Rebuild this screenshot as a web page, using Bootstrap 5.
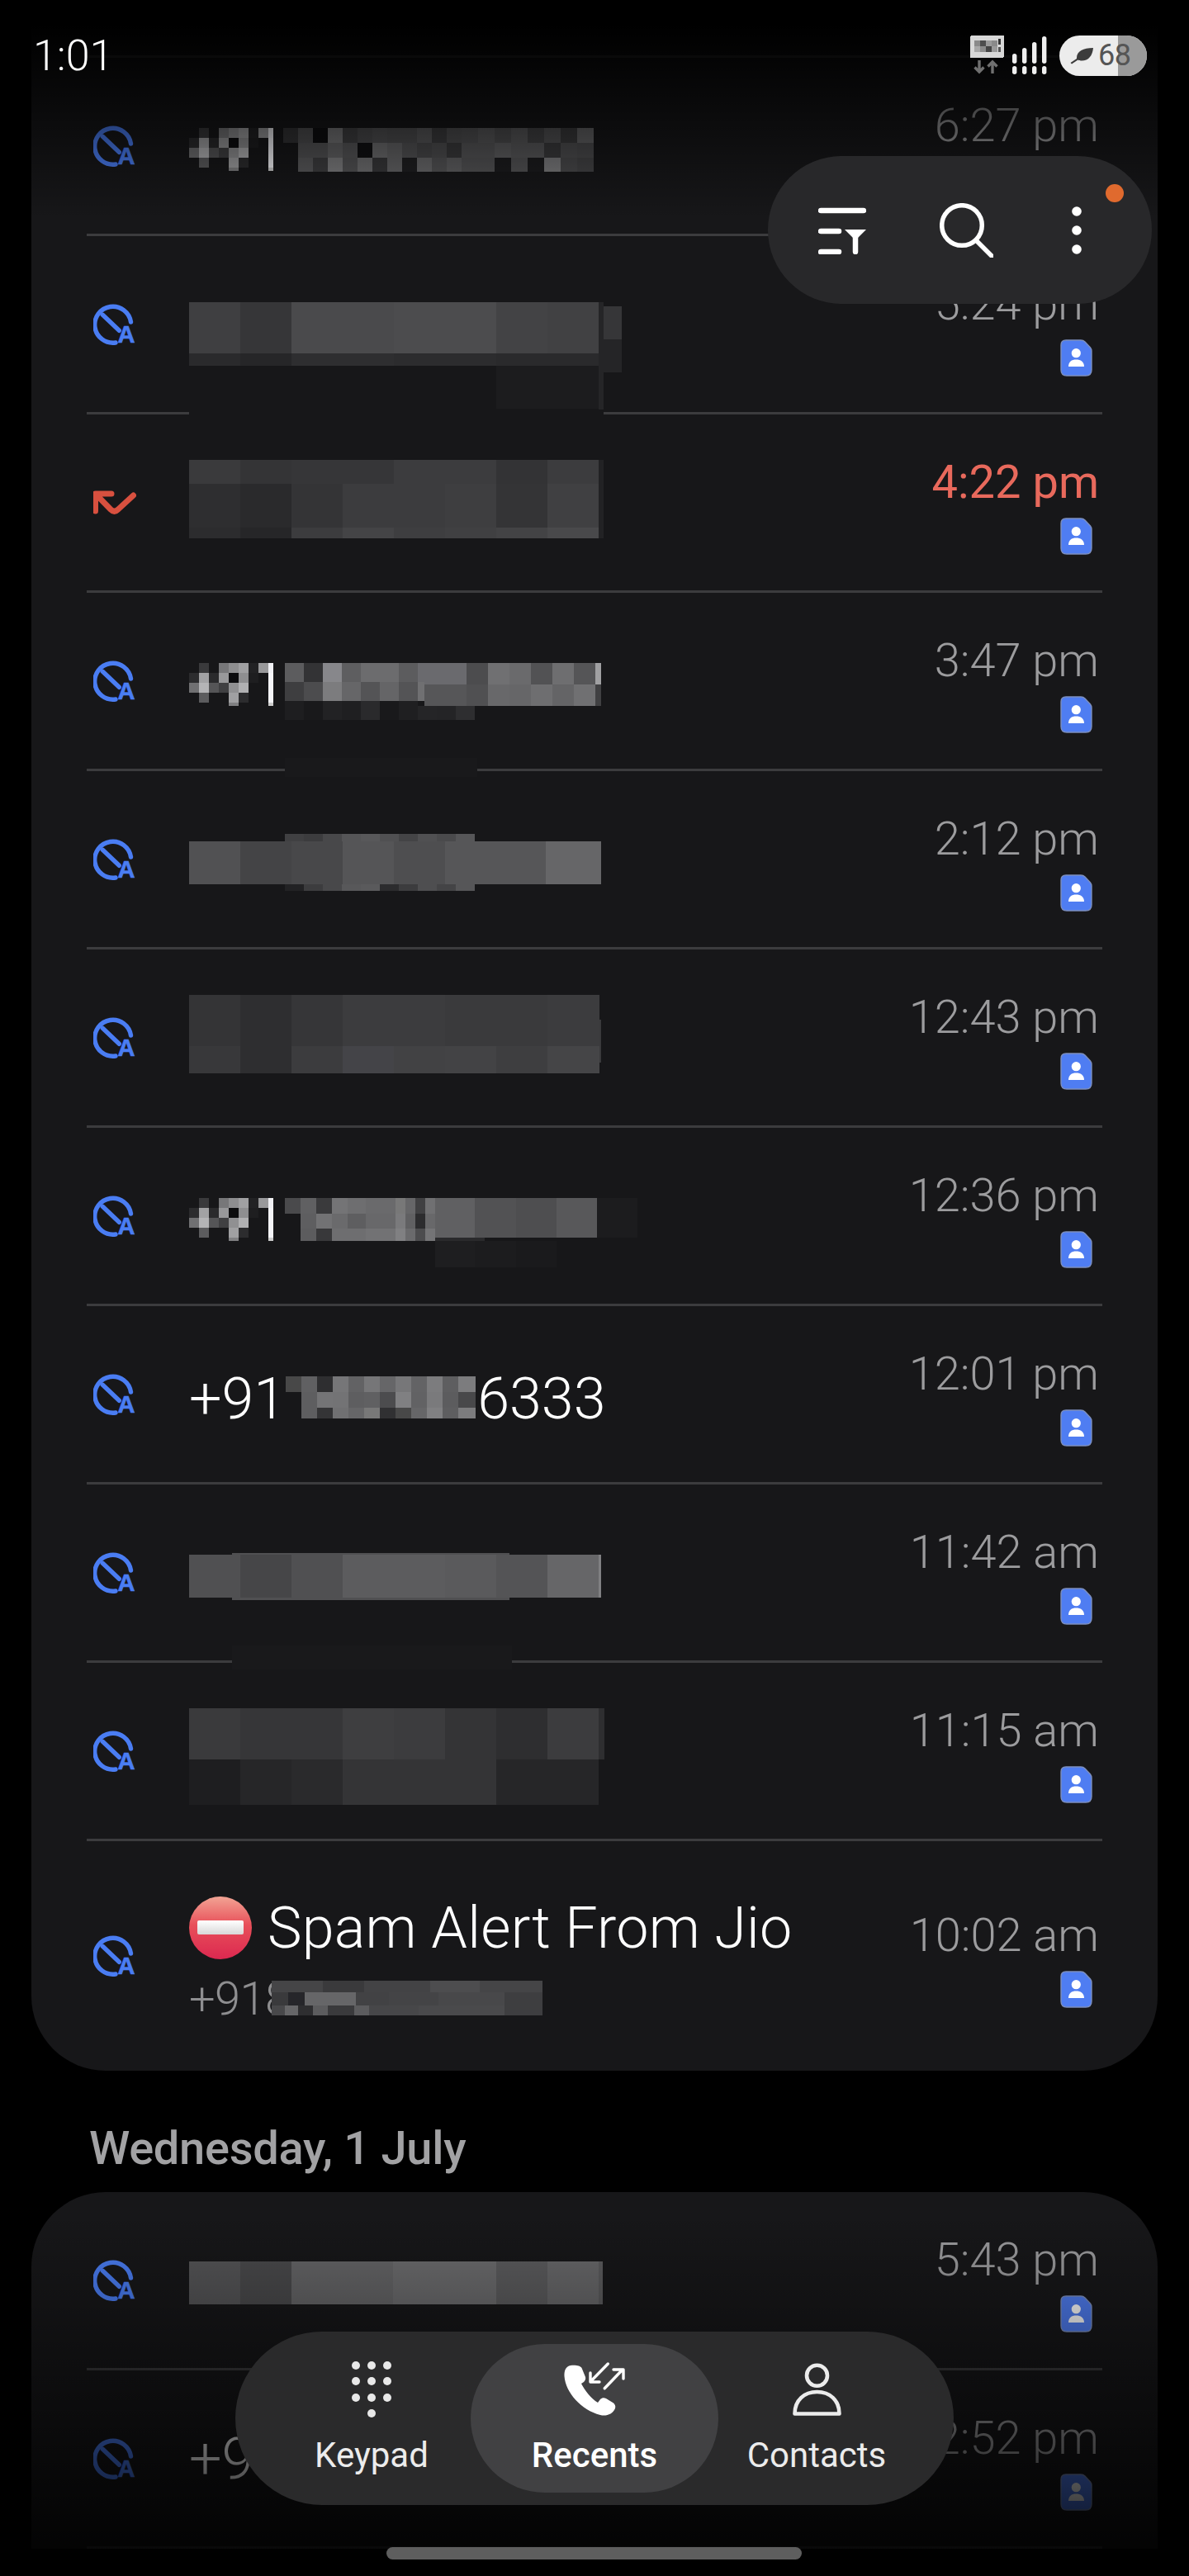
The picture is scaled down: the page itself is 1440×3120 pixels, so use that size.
<!DOCTYPE html>
<html lang="en">
<head>
<meta charset="utf-8">
<title>Phone - Recents</title>
<link href="https://cdn.jsdelivr.net/npm/bootstrap@5.3.0/dist/css/bootstrap.min.css" rel="stylesheet">
<style>
html,body{background:#000;margin:0}
body{font-family:Roboto,"Liberation Sans",sans-serif;width:1440px}
.phone-screen{position:relative;width:1440px;height:3120px;overflow:hidden;background:#000}
.log-card{margin:0 38px;background:#171719;border:0;border-radius:0 0 90px 90px;--bs-card-bg:#171719}
.log-card-second{border-radius:90px 90px 0 0}
.top-spacer{height:70px;margin:0 67px;border-bottom:3px solid #3c3c3e}
.call-row{height:216px;margin:0 67px;border-bottom:3px solid #3c3c3e}
.call-row-last{height:278px;border-bottom:0}
.call-icon{flex:0 0 124px;padding-left:8px}
.call-icon svg{display:block}
.name-col{flex:1 1 0;min-width:0}
.pix{display:block;overflow:visible;shape-rendering:crispEdges}
.name-text{font-weight:300;font-size:70px;line-height:76px;color:#fff;white-space:nowrap}
.num-line{height:213px;padding-top:8px}
.num-line span{position:relative;top:1px}
.num-line svg{overflow:visible;shape-rendering:crispEdges;flex:none}
.spam-col{padding-top:15px}
.spam-line{height:76px;gap:19px;letter-spacing:.25px}
.spam-line svg{flex:none}
.sub-num{font-weight:300;font-size:56px;line-height:70px;height:70px;margin-top:13px;color:#8e8e90;letter-spacing:-.6px;white-space:nowrap}
.sub-cover{overflow:visible;shape-rendering:crispEdges;margin:13px 0 0 -22px;flex:none}
.time-col{padding-right:4px}
.call-time{font-weight:300;font-size:56px;line-height:76px;color:#9c9c9e;white-space:nowrap}
.call-time-missed{color:#e8695c;font-weight:400}
.sim-badge{display:block;margin-top:5px;margin-right:8px}
.date-head{height:147px;padding:0 0 0 108px;margin:0;display:flex;align-items:flex-start}
.date-head span{display:block;margin-top:61px;font-weight:500;font-size:56px;line-height:66px;letter-spacing:-.3px;color:#a2a2a4}
.fade-top{position:absolute;left:0;right:0;top:0;height:265px;background:linear-gradient(to bottom,#000 30px,rgba(0,0,0,0) 265px)}
.fade-bottom{position:absolute;left:0;right:0;top:2680px;height:480px;background:linear-gradient(to bottom,rgba(0,0,0,0),#000)}
.status-row{position:absolute;left:0;right:0;top:0;height:100px}
.clock{position:absolute;left:40px;top:40px;font-weight:300;font-size:52px;line-height:56px;color:#fff}
.status-glyphs{position:absolute;left:1175px;top:43px;gap:9px}
.battery-pill{position:relative;width:106px;height:49px;border-radius:25px;background:#ececec;overflow:hidden;margin-left:6px}
.battery-rest{position:absolute;left:71px;top:0;bottom:0;right:0;background:#9a9a9a}
.battery-leaf{position:absolute;left:13px;top:14px}
.battery-num{position:absolute;left:47px;top:3px;font-size:36px;line-height:42px;color:#555;letter-spacing:-.6px}
.tool-pill{position:absolute;left:930px;top:189px;width:465px;height:179px;border-radius:90px;background:#28282a;padding-left:61px}
.tool-gap-a{margin-left:89px}
.tool-gap-b{margin-left:90px}
.tool-dot{position:absolute;left:409px;top:34px;width:22px;height:22px;border-radius:50%;background:#e06a2e}
.nav-pill{position:absolute;left:285px;top:2824px;width:870px;height:210px;border-radius:105px;background:#2a2a2b;padding:15px 47px 0 45px}
.nav-tab{display:flex;flex-direction:column;align-items:center;height:180px;padding-top:23px}
.nav-tab svg{display:block;overflow:visible;height:64px}
.nav-label{margin-top:20px;font-size:42px;line-height:56px;color:#ececec;white-space:nowrap}
.tab-a{width:240px}
.tab-b{width:300px;border-radius:90px;background:#414143}
.tab-b .nav-label{color:#fff;font-weight:500}
.tab-c{width:238px}
.home-bar{position:absolute;left:468px;top:3085px;width:503px;height:15px;border-radius:8px;background:#5e5e5e}
</style>
</head>
<body>
<svg width="0" height="0" class="position-absolute" aria-hidden="true">
  <defs>
    <g id="blocked">
      <g transform="translate(0 1)" fill="none" stroke="#4a7df3" stroke-width="5.4" stroke-linecap="round">
        <path d="M27 46A22 22 0 1 1 45.5 21"/>
        <path d="M11.3 12.3L31.3 31.3"/>
      </g>
      <text x="29.5" y="47" font-family="Liberation Sans,sans-serif" font-weight="700" font-size="29" fill="#4a7df3" stroke="#4a7df3" stroke-width=".7">A</text>
    </g>
    <g id="simbadge">
      <path d="M7 1H25Q28 1 30 3L36.5 10Q38 12 38 14V37Q38 44 31 44H8Q1 44 1 37V7Q1 1 7 1Z" fill="#4f7df2" stroke="#7d8fbd" stroke-width="1.4"/>
      <circle cx="19.3" cy="16.7" r="5.6" fill="#fff"/>
      <path d="M10 33C10 27 14 24.5 19.3 24.5S29 27 29 33Z" fill="#fff"/>
    </g>
    <g id="p91" shape-rendering="crispEdges">
      <rect x="12" y="0" width="12" height="12" fill="#3a3a3c"/><rect x="36" y="0" width="12" height="12" fill="#777779"/><rect x="48" y="0" width="12" height="12" fill="#8e8e90"/><rect x="60" y="0" width="12" height="12" fill="#a0a0a2"/><rect x="72" y="0" width="12" height="12" fill="#222224"/><rect x="84" y="0" width="12" height="12" fill="#99999b"/><rect x="96" y="0" width="6" height="12" fill="#f0f0f4"/>
      <rect x="0" y="12" width="12" height="12" fill="#2c2c2e"/><rect x="12" y="12" width="12" height="12" fill="#a2a2a4"/><rect x="24" y="12" width="12" height="12" fill="#2a2a2c"/><rect x="36" y="12" width="12" height="12" fill="#98989a"/><rect x="48" y="12" width="12" height="12" fill="#0c0c0e"/><rect x="60" y="12" width="12" height="12" fill="#8e8e90"/><rect x="72" y="12" width="12" height="12" fill="#1e1e20"/><rect x="96" y="12" width="6" height="12" fill="#f4f4f8"/>
      <rect x="0" y="24" width="12" height="12" fill="#707072"/><rect x="12" y="24" width="12" height="12" fill="#b4b4b6"/><rect x="24" y="24" width="12" height="12" fill="#555557"/><rect x="36" y="24" width="12" height="12" fill="#404042"/><rect x="48" y="24" width="12" height="12" fill="#909092"/><rect x="60" y="24" width="12" height="12" fill="#b0b0b2"/><rect x="96" y="24" width="6" height="12" fill="#f4f4f8"/>
      <rect x="12" y="36" width="12" height="12" fill="#5c5c5e"/><rect x="48" y="36" width="12" height="12" fill="#a0a0a2"/><rect x="60" y="36" width="12" height="12" fill="#2c2c2e"/><rect x="96" y="36" width="6" height="12" fill="#f4f4f8"/>
      <rect x="48" y="48" width="12" height="4" fill="#808082"/><rect x="96" y="48" width="6" height="4" fill="#cccccc"/>
    </g>
  </defs>
</svg>

<main class="phone-screen">
  <section class="card log-card">
    <div class="top-spacer"></div>
    <ul class="list-unstyled mb-0">
      <li class="call-row d-flex align-items-center">
        <div class="call-icon"><svg width="52" height="50"><use href="#blocked"/></svg></div>
        <div class="name-col"><svg class="pix" width="520" height="213">
          <use href="#p91" y="85"/>
          <rect x="114" y="85" width="18" height="18" fill="#343436"/><rect x="132" y="85" width="18" height="18" fill="#4f4f51"/><rect x="150" y="85" width="18" height="18" fill="#0e0e10"/><rect x="168" y="85" width="18" height="18" fill="#777779"/><rect x="186" y="85" width="18" height="18" fill="#414143"/><rect x="204" y="85" width="18" height="18" fill="#4c4c4e"/><rect x="222" y="85" width="18" height="18" fill="#525254"/><rect x="240" y="85" width="18" height="18" fill="#4f4f51"/><rect x="258" y="85" width="18" height="18" fill="#4f4f51"/><rect x="276" y="85" width="18" height="18" fill="#5a5a5c"/><rect x="294" y="85" width="18" height="18" fill="#3e3e40"/><rect x="312" y="85" width="18" height="18" fill="#4f4f51"/><rect x="330" y="85" width="20" height="18" fill="#525254"/><rect x="350" y="85" width="20" height="18" fill="#5a5a5c"/><rect x="370" y="85" width="20" height="18" fill="#4f4f51"/><rect x="390" y="85" width="20" height="18" fill="#5a5a5c"/><rect x="410" y="85" width="20" height="18" fill="#444446"/><rect x="430" y="85" width="20" height="18" fill="#545456"/><rect x="450" y="85" width="20" height="18" fill="#3b3b3d"/><rect x="470" y="85" width="20" height="18" fill="#656567"/>
          <rect x="132" y="103" width="18" height="18" fill="#545456"/><rect x="150" y="103" width="18" height="18" fill="#545456"/><rect x="168" y="103" width="18" height="18" fill="#656567"/><rect x="186" y="103" width="18" height="18" fill="#575759"/><rect x="204" y="103" width="18" height="18" fill="#111113"/><rect x="222" y="103" width="18" height="18" fill="#6e6e70"/><rect x="240" y="103" width="18" height="18" fill="#656567"/><rect x="258" y="103" width="18" height="18" fill="#545456"/><rect x="276" y="103" width="18" height="18" fill="#4a4a4c"/><rect x="294" y="103" width="18" height="18" fill="#4f4f51"/><rect x="312" y="103" width="18" height="18" fill="#3b3b3d"/><rect x="330" y="103" width="20" height="18" fill="#575759"/><rect x="350" y="103" width="20" height="18" fill="#575759"/><rect x="370" y="103" width="20" height="18" fill="#606062"/><rect x="390" y="103" width="20" height="18" fill="#5a5a5c"/><rect x="410" y="103" width="20" height="18" fill="#5a5a5c"/><rect x="430" y="103" width="20" height="18" fill="#3b3b3d"/><rect x="450" y="103" width="20" height="18" fill="#4f4f51"/><rect x="470" y="103" width="20" height="18" fill="#4c4c4e"/>
          <rect x="132" y="121" width="18" height="17" fill="#5a5a5c"/><rect x="150" y="121" width="18" height="17" fill="#3e3e40"/><rect x="168" y="121" width="18" height="17" fill="#7e7e80"/><rect x="186" y="121" width="18" height="17" fill="#545456"/><rect x="204" y="121" width="18" height="17" fill="#707072"/><rect x="222" y="121" width="18" height="17" fill="#38383a"/><rect x="240" y="121" width="18" height="17" fill="#656567"/><rect x="258" y="121" width="18" height="17" fill="#1f1f21"/><rect x="276" y="121" width="18" height="17" fill="#6a6a6c"/><rect x="294" y="121" width="18" height="17" fill="#545456"/><rect x="312" y="121" width="18" height="17" fill="#606062"/><rect x="330" y="121" width="20" height="17" fill="#545456"/><rect x="350" y="121" width="20" height="17" fill="#545456"/><rect x="370" y="121" width="20" height="17" fill="#1c1c1e"/><rect x="390" y="121" width="20" height="17" fill="#545456"/><rect x="410" y="121" width="20" height="17" fill="#1c1c1e"/><rect x="430" y="121" width="20" height="17" fill="#7c7c7e"/><rect x="450" y="121" width="20" height="17" fill="#4a4a4c"/><rect x="470" y="121" width="20" height="17" fill="#444446"/>
        </svg></div>
        <div class="time-col d-flex flex-column align-items-end"><div class="call-time">6:27 pm</div><svg class="sim-badge" width="39" height="45"><use href="#simbadge"/></svg></div>
      </li>
      <li class="call-row d-flex align-items-center">
        <div class="call-icon"><svg width="52" height="50"><use href="#blocked"/></svg></div>
        <div class="name-col"><svg class="pix" width="520" height="213">
          <rect x="0" y="209" width="502" height="10" fill="#171719"/>
          <rect x="372" y="157" width="124" height="52" fill="#1c1c1e"/>
          <rect x="0" y="80" width="62" height="62" fill="#3f3f41"/><rect x="62" y="80" width="62" height="62" fill="#363638"/><rect x="124" y="80" width="124" height="62" fill="#4a4a4c"/><rect x="248" y="80" width="124" height="62" fill="#4c4c4e"/><rect x="372" y="80" width="62" height="62" fill="#434345"/><rect x="434" y="80" width="62" height="62" fill="#414143"/>
          <rect x="0" y="142" width="62" height="15" fill="#2a2a2c"/><rect x="62" y="142" width="62" height="15" fill="#262628"/><rect x="124" y="142" width="124" height="15" fill="#2e2e30"/><rect x="248" y="142" width="124" height="15" fill="#2c2c2e"/><rect x="372" y="142" width="124" height="15" fill="#2a2a2c"/>
          <rect x="496" y="80" width="6" height="130" fill="#252527"/><rect x="502" y="85" width="22" height="40" fill="#363638"/><rect x="502" y="125" width="22" height="40" fill="#252527"/>
        </svg></div>
        <div class="time-col d-flex flex-column align-items-end"><div class="call-time">5:24 pm</div><svg class="sim-badge" width="39" height="45"><use href="#simbadge"/></svg></div>
      </li>
      <li class="call-row d-flex align-items-center">
        <div class="call-icon"><svg width="52" height="50" fill="none" stroke="#d8503f" stroke-width="7" stroke-linecap="round" stroke-linejoin="round"><path d="M2.5 35V14H22M3 14.5L21 33Q25.5 37.5 30 33L48.5 16"/></svg></div>
        <div class="name-col"><svg class="pix" width="520" height="213">
          <rect x="0" y="55" width="62" height="29" fill="#3a3a3c"/><rect x="62" y="55" width="62" height="29" fill="#343436"/><rect x="124" y="55" width="124" height="29" fill="#363638"/><rect x="248" y="55" width="124" height="29" fill="#3c3c3e"/><rect x="372" y="55" width="62" height="29" fill="#333335"/><rect x="434" y="55" width="62" height="29" fill="#3c3c3e"/>
          <rect x="0" y="84" width="62" height="53" fill="#2e2e30"/><rect x="62" y="84" width="62" height="53" fill="#2a2a2c"/><rect x="124" y="84" width="62" height="53" fill="#343436"/><rect x="186" y="84" width="124" height="53" fill="#3c3c3e"/><rect x="310" y="84" width="62" height="53" fill="#3e3e40"/><rect x="372" y="84" width="62" height="53" fill="#343436"/><rect x="434" y="84" width="62" height="53" fill="#404042"/>
          <rect x="0" y="137" width="62" height="13" fill="#2c2c2e"/><rect x="62" y="137" width="62" height="13" fill="#262628"/><rect x="124" y="137" width="62" height="13" fill="#3c3c3e"/><rect x="186" y="137" width="62" height="13" fill="#444446"/><rect x="248" y="137" width="62" height="13" fill="#3e3e40"/><rect x="310" y="137" width="62" height="13" fill="#404042"/><rect x="372" y="137" width="62" height="13" fill="#434345"/><rect x="434" y="137" width="62" height="13" fill="#49494b"/>
          <rect x="496" y="55" width="6" height="95" fill="#222224"/>
        </svg></div>
        <div class="time-col d-flex flex-column align-items-end"><div class="call-time call-time-missed">4:22 pm</div><svg class="sim-badge" width="39" height="45"><use href="#simbadge"/></svg></div>
      </li>
      <li class="call-row d-flex align-items-center">
        <div class="call-icon"><svg width="52" height="50"><use href="#blocked"/></svg></div>
        <div class="name-col"><svg class="pix" width="520" height="213">
          <rect x="116" y="200" width="233" height="23" fill="#19191b"/>
          <use href="#p91" y="85"/>
          <rect x="116" y="85" width="23" height="23" fill="#5c5c5e"/><rect x="139" y="85" width="23" height="23" fill="#333335"/><rect x="162" y="85" width="23" height="23" fill="#87878b"/><rect x="185" y="85" width="23" height="23" fill="#5e5e60"/><rect x="208" y="85" width="46" height="23" fill="#6c6c6e"/><rect x="254" y="85" width="23" height="23" fill="#5c5c5e"/><rect x="277" y="85" width="59" height="26" fill="#6a6a6e"/><rect x="336" y="85" width="26" height="26" fill="#4c4c4e"/><rect x="362" y="85" width="26" height="26" fill="#707072"/><rect x="388" y="85" width="26" height="26" fill="#6a6a6c"/><rect x="414" y="85" width="26" height="26" fill="#525254"/><rect x="440" y="85" width="26" height="26" fill="#6e6e70"/><rect x="466" y="85" width="26" height="26" fill="#555557"/><rect x="492" y="85" width="7" height="26" fill="#a0a0a2"/>
          <rect x="116" y="108" width="23" height="23" fill="#3e3e40"/><rect x="139" y="108" width="23" height="23" fill="#4c4c4e"/><rect x="162" y="108" width="23" height="23" fill="#7c7c7e"/><rect x="185" y="108" width="23" height="23" fill="#666668"/><rect x="208" y="108" width="23" height="23" fill="#545456"/><rect x="231" y="108" width="23" height="23" fill="#656567"/><rect x="254" y="108" width="23" height="23" fill="#545456"/><rect x="277" y="108" width="8" height="23" fill="#707072"/>
          <rect x="285" y="111" width="51" height="26" fill="#565658"/><rect x="336" y="111" width="26" height="26" fill="#505052"/><rect x="362" y="111" width="26" height="26" fill="#68686a"/><rect x="388" y="111" width="26" height="26" fill="#666668"/><rect x="414" y="111" width="26" height="26" fill="#6e6e70"/><rect x="440" y="111" width="26" height="26" fill="#646466"/><rect x="466" y="111" width="26" height="26" fill="#707072"/><rect x="492" y="111" width="7" height="26" fill="#404042"/>
          <rect x="116" y="131" width="23" height="23" fill="#1e1e20"/><rect x="139" y="131" width="23" height="23" fill="#19191b"/><rect x="162" y="131" width="23" height="23" fill="#222224"/><rect x="185" y="131" width="23" height="23" fill="#1f1f21"/><rect x="208" y="131" width="23" height="23" fill="#2a2a2c"/><rect x="231" y="131" width="23" height="23" fill="#19191b"/><rect x="254" y="131" width="23" height="23" fill="#1f1f21"/><rect x="277" y="137" width="23" height="17" fill="#252527"/><rect x="300" y="137" width="23" height="17" fill="#242426"/><rect x="323" y="137" width="23" height="17" fill="#2e2e30"/>
        </svg></div>
        <div class="time-col d-flex flex-column align-items-end"><div class="call-time">3:47 pm</div><svg class="sim-badge" width="39" height="45"><use href="#simbadge"/></svg></div>
      </li>
      <li class="call-row d-flex align-items-center">
        <div class="call-icon"><svg width="52" height="50"><use href="#blocked"/></svg></div>
        <div class="name-col"><svg class="pix" width="520" height="213">
          <rect x="116" y="76" width="23" height="9" fill="#404042"/><rect x="139" y="76" width="23" height="9" fill="#3c3c3e"/><rect x="162" y="76" width="23" height="9" fill="#48484a"/><rect x="185" y="76" width="23" height="9" fill="#555557"/><rect x="208" y="76" width="23" height="9" fill="#58585a"/><rect x="231" y="76" width="23" height="9" fill="#505052"/><rect x="254" y="76" width="23" height="9" fill="#444446"/><rect x="277" y="76" width="23" height="9" fill="#505052"/><rect x="300" y="76" width="23" height="9" fill="#4a4a4c"/><rect x="323" y="76" width="23" height="9" fill="#565658"/>
          <rect x="0" y="85" width="62" height="52" fill="#515153"/><rect x="62" y="85" width="62" height="52" fill="#444446"/><rect x="124" y="85" width="62" height="52" fill="#48484a"/><rect x="186" y="85" width="62" height="52" fill="#555557"/><rect x="248" y="85" width="62" height="52" fill="#4e4e50"/><rect x="310" y="85" width="122" height="52" fill="#565658"/><rect x="432" y="85" width="67" height="52" fill="#666668"/>
          <rect x="116" y="137" width="23" height="8" fill="#222224"/><rect x="139" y="137" width="23" height="8" fill="#3c3c3e"/><rect x="162" y="137" width="23" height="8" fill="#48484a"/><rect x="185" y="137" width="23" height="8" fill="#58585a"/><rect x="208" y="137" width="23" height="8" fill="#5a5a5c"/><rect x="231" y="137" width="23" height="8" fill="#2c2c2e"/><rect x="254" y="137" width="23" height="8" fill="#3c3c3e"/><rect x="277" y="137" width="23" height="8" fill="#4e4e50"/><rect x="300" y="137" width="23" height="8" fill="#444446"/><rect x="323" y="137" width="23" height="8" fill="#565658"/>
        </svg></div>
        <div class="time-col d-flex flex-column align-items-end"><div class="call-time">2:12 pm</div><svg class="sim-badge" width="39" height="45"><use href="#simbadge"/></svg></div>
      </li>
      <li class="call-row d-flex align-items-center">
        <div class="call-icon"><svg width="52" height="50"><use href="#blocked"/></svg></div>
        <div class="name-col"><svg class="pix" width="520" height="213">
          <rect x="0" y="55" width="62" height="62" fill="#343436"/><rect x="62" y="55" width="62" height="62" fill="#2e2e30"/><rect x="124" y="55" width="62" height="62" fill="#363638"/><rect x="186" y="55" width="124" height="62" fill="#3c3c3e"/><rect x="310" y="55" width="124" height="62" fill="#3a3a3c"/><rect x="434" y="55" width="63" height="62" fill="#3c3c3e"/>
          <rect x="0" y="117" width="62" height="33" fill="#38383a"/><rect x="62" y="117" width="62" height="33" fill="#2e2e30"/><rect x="124" y="117" width="62" height="33" fill="#3c3c3e"/><rect x="186" y="117" width="62" height="33" fill="#444448"/><rect x="248" y="117" width="62" height="33" fill="#424244"/><rect x="310" y="117" width="62" height="33" fill="#434345"/><rect x="372" y="117" width="62" height="33" fill="#3e3e40"/><rect x="434" y="117" width="63" height="33" fill="#454547"/>
          <rect x="497" y="85" width="2" height="52" fill="#3a3a3c"/>
        </svg></div>
        <div class="time-col d-flex flex-column align-items-end"><div class="call-time">12:43 pm</div><svg class="sim-badge" width="39" height="45"><use href="#simbadge"/></svg></div>
      </li>
      <li class="call-row d-flex align-items-center">
        <div class="call-icon"><svg width="52" height="50"><use href="#blocked"/></svg></div>
        <div class="name-col"><svg class="pix" width="560" height="213">
          <use href="#p91" y="85"/>
          <rect x="116" y="85" width="19" height="19" fill="#4a4a4c"/><rect x="135" y="85" width="19" height="19" fill="#606062"/><rect x="154" y="85" width="19" height="19" fill="#3a3a3c"/><rect x="173" y="85" width="19" height="19" fill="#747476"/><rect x="192" y="85" width="22" height="19" fill="#6e6e70"/><rect x="214" y="85" width="36" height="19" fill="#6a6a6c"/><rect x="250" y="85" width="12" height="19" fill="#787878"/><rect x="262" y="85" width="12" height="19" fill="#666668"/><rect x="274" y="85" width="12" height="19" fill="#404042"/><rect x="286" y="85" width="12" height="19" fill="#707072"/>
          <rect x="135" y="104" width="19" height="18" fill="#5e5e60"/><rect x="154" y="104" width="19" height="18" fill="#727274"/><rect x="173" y="104" width="19" height="18" fill="#6a6a6c"/><rect x="192" y="104" width="22" height="18" fill="#5e5e60"/><rect x="214" y="104" width="36" height="18" fill="#68686a"/><rect x="250" y="104" width="12" height="18" fill="#7a7a7c"/><rect x="262" y="104" width="12" height="18" fill="#606062"/><rect x="274" y="104" width="12" height="18" fill="#2c2c2e"/><rect x="286" y="104" width="12" height="18" fill="#68686a"/>
          <rect x="135" y="122" width="19" height="15" fill="#5c5c5e"/><rect x="154" y="122" width="19" height="15" fill="#38383a"/><rect x="173" y="122" width="19" height="15" fill="#6e6e70"/><rect x="192" y="122" width="22" height="15" fill="#6e6e70"/><rect x="214" y="122" width="36" height="15" fill="#727274"/><rect x="250" y="122" width="12" height="15" fill="#808082"/><rect x="262" y="122" width="12" height="15" fill="#6a6a6c"/><rect x="274" y="122" width="12" height="15" fill="#4c4c4e"/><rect x="286" y="122" width="12" height="15" fill="#747476"/>
          <rect x="298" y="85" width="48" height="48" fill="#606062"/><rect x="346" y="85" width="50" height="48" fill="#525254"/><rect x="396" y="85" width="49" height="48" fill="#4e4e50"/><rect x="445" y="85" width="49" height="48" fill="#58585a"/><rect x="494" y="85" width="49" height="48" fill="#1c1c1e"/>
          <rect x="298" y="133" width="60" height="4" fill="#2a2a2c"/><rect x="298" y="137" width="48" height="32" fill="#1e1e20"/><rect x="346" y="137" width="50" height="32" fill="#1c1c1e"/><rect x="396" y="137" width="49" height="32" fill="#1a1a1c"/>
        </svg></div>
        <div class="time-col d-flex flex-column align-items-end"><div class="call-time">12:36 pm</div><svg class="sim-badge" width="39" height="45"><use href="#simbadge"/></svg></div>
      </li>
      <li class="call-row d-flex align-items-center">
        <div class="call-icon"><svg width="52" height="50"><use href="#blocked"/></svg></div>
        <div class="name-col"><div class="num-line d-flex align-items-center name-text"><span>+91</span>
          <svg class="flex-shrink-0" width="232" height="51" viewBox="0 85 232 51">
            <rect x="0" y="85" width="19" height="19" fill="#484848"/><rect x="19" y="85" width="19" height="19" fill="#606062"/><rect x="38" y="85" width="19" height="19" fill="#2e2e30"/><rect x="57" y="85" width="19" height="19" fill="#767678"/><rect x="76" y="85" width="19" height="19" fill="#626264"/><rect x="95" y="85" width="19" height="19" fill="#767678"/><rect x="114" y="85" width="19" height="19" fill="#666668"/><rect x="133" y="85" width="19" height="19" fill="#777779"/><rect x="152" y="85" width="19" height="19" fill="#636365"/><rect x="171" y="85" width="19" height="19" fill="#7c7c7e"/><rect x="190" y="85" width="19" height="19" fill="#5e5e60"/><rect x="209" y="85" width="21" height="19" fill="#7c7c7e"/>
            <rect x="19" y="104" width="19" height="19" fill="#5e5e60"/><rect x="38" y="104" width="19" height="19" fill="#747476"/><rect x="57" y="104" width="19" height="19" fill="#737375"/><rect x="76" y="104" width="19" height="19" fill="#5e5e60"/><rect x="95" y="104" width="19" height="19" fill="#606062"/><rect x="114" y="104" width="19" height="19" fill="#4c4c4e"/><rect x="133" y="104" width="19" height="19" fill="#808082"/><rect x="152" y="104" width="19" height="19" fill="#626264"/><rect x="171" y="104" width="19" height="19" fill="#7a7a7c"/><rect x="190" y="104" width="19" height="19" fill="#5c5c5e"/><rect x="209" y="104" width="21" height="19" fill="#48484a"/>
            <rect x="19" y="123" width="19" height="13" fill="#5e5e60"/><rect x="38" y="123" width="19" height="13" fill="#343436"/><rect x="57" y="123" width="19" height="13" fill="#707072"/><rect x="76" y="123" width="19" height="13" fill="#666668"/><rect x="95" y="123" width="19" height="13" fill="#787878"/><rect x="114" y="123" width="19" height="13" fill="#303032"/><rect x="133" y="123" width="19" height="13" fill="#484848"/><rect x="152" y="123" width="19" height="13" fill="#666668"/><rect x="171" y="123" width="19" height="13" fill="#808082"/><rect x="190" y="123" width="19" height="13" fill="#5e5e60"/><rect x="209" y="123" width="21" height="13" fill="#7c7c7e"/>
          </svg><span>6333</span></div></div>
        <div class="time-col d-flex flex-column align-items-end"><div class="call-time">12:01 pm</div><svg class="sim-badge" width="39" height="45"><use href="#simbadge"/></svg></div>
      </li>
      <li class="call-row d-flex align-items-center">
        <div class="call-icon"><svg width="52" height="50"><use href="#blocked"/></svg></div>
        <div class="name-col"><svg class="pix" width="520" height="213">
          <rect x="52" y="195" width="339" height="29" fill="#19191b"/>
          <rect x="52" y="83" width="336" height="57" fill="#505052"/>
          <rect x="0" y="85" width="62" height="52" fill="#505052"/><rect x="62" y="85" width="62" height="52" fill="#464648"/><rect x="124" y="85" width="62" height="52" fill="#505052"/><rect x="186" y="85" width="124" height="52" fill="#5c5c5e"/><rect x="310" y="85" width="62" height="52" fill="#5a5a5c"/><rect x="372" y="85" width="62" height="52" fill="#545456"/><rect x="434" y="85" width="62" height="52" fill="#666668"/><rect x="496" y="85" width="3" height="52" fill="#808082"/>
        </svg></div>
        <div class="time-col d-flex flex-column align-items-end"><div class="call-time">11:42 am</div><svg class="sim-badge" width="39" height="45"><use href="#simbadge"/></svg></div>
      </li>
      <li class="call-row d-flex align-items-center">
        <div class="call-icon"><svg width="52" height="50"><use href="#blocked"/></svg></div>
        <div class="name-col"><svg class="pix" width="520" height="213">
          <rect x="0" y="55" width="62" height="62" fill="#3a3a3c"/><rect x="62" y="55" width="124" height="62" fill="#363638"/><rect x="186" y="55" width="62" height="62" fill="#3e3e40"/><rect x="248" y="55" width="62" height="62" fill="#3c3c3e"/><rect x="310" y="55" width="62" height="62" fill="#343436"/><rect x="372" y="55" width="62" height="62" fill="#2e2e30"/><rect x="434" y="55" width="62" height="62" fill="#3c3c3e"/><rect x="496" y="55" width="7" height="62" fill="#2e2e30"/>
          <rect x="0" y="117" width="62" height="55" fill="#1e1e20"/><rect x="62" y="117" width="62" height="55" fill="#262628"/><rect x="124" y="117" width="62" height="55" fill="#2a2a2c"/><rect x="186" y="117" width="186" height="55" fill="#343436"/><rect x="372" y="117" width="124" height="55" fill="#262628"/>
        </svg></div>
        <div class="time-col d-flex flex-column align-items-end"><div class="call-time">11:15 am</div><svg class="sim-badge" width="39" height="45"><use href="#simbadge"/></svg></div>
      </li>
      <li class="call-row call-row-last d-flex align-items-center">
        <div class="call-icon"><svg width="52" height="50"><use href="#blocked"/></svg></div>
        <div class="name-col spam-col">
          <div class="spam-line d-flex align-items-center name-text">
            <svg width="76" height="76" viewBox="0 0 76 76">
              <defs>
                <linearGradient id="stopFill" x1="0" y1="0" x2="0" y2="1"><stop offset="0" stop-color="#f2a494"/><stop offset=".45" stop-color="#e8505a"/><stop offset="1" stop-color="#dc2850"/></linearGradient>
                <linearGradient id="stopBar" x1="0" y1="0" x2="0" y2="1"><stop offset="0" stop-color="#ffffff"/><stop offset="1" stop-color="#d8d8d8"/></linearGradient>
              </defs>
              <circle cx="38" cy="38" r="38" fill="url(#stopFill)"/>
              <rect x="10" y="29" width="56" height="17" rx="2" fill="url(#stopBar)"/>
            </svg>
            <span>Spam Alert From Jio</span>
          </div>
          <div class="sub-num d-flex">
            <span>+918</span>
            <svg class="sub-cover" width="328" height="42" viewBox="0 0 328 42">
              <rect x="0" y="0" width="62" height="14" fill="#454547"/><rect x="62" y="0" width="50" height="14" fill="#3a3a3c"/><rect x="112" y="0" width="80" height="14" fill="#434345"/><rect x="192" y="0" width="60" height="14" fill="#4d4d4f"/><rect x="252" y="0" width="76" height="14" fill="#454547"/>
              <rect x="0" y="14" width="20" height="16" fill="#3a3a3c"/><rect x="20" y="14" width="20" height="16" fill="#26262a"/><rect x="40" y="14" width="62" height="16" fill="#666668"/><rect x="102" y="14" width="40" height="16" fill="#424244"/><rect x="142" y="14" width="60" height="16" fill="#444446"/><rect x="202" y="14" width="80" height="16" fill="#48484a"/><rect x="282" y="14" width="46" height="16" fill="#3e3e40"/>
              <rect x="0" y="30" width="16" height="12" fill="#48484a"/><rect x="16" y="30" width="16" height="12" fill="#666668"/><rect x="32" y="30" width="18" height="12" fill="#2e2e30"/><rect x="50" y="30" width="18" height="12" fill="#5c5c5e"/><rect x="68" y="30" width="32" height="12" fill="#3a3a3c"/><rect x="100" y="30" width="18" height="12" fill="#5c5c5e"/><rect x="118" y="30" width="60" height="12" fill="#474749"/><rect x="178" y="30" width="104" height="12" fill="#4a4a4c"/><rect x="282" y="30" width="46" height="12" fill="#3e3e40"/>
            </svg>
          </div>
        </div>
        <div class="time-col d-flex flex-column align-items-end"><div class="call-time">10:02 am</div><svg class="sim-badge" width="39" height="45"><use href="#simbadge"/></svg></div>
      </li>
    </ul>
  </section>

  <h2 class="date-head"><span>Wednesday, 1 July</span></h2>

  <section class="card log-card log-card-second">
    <ul class="list-unstyled mb-0">
      <li class="call-row d-flex align-items-center">
        <div class="call-icon"><svg width="52" height="50"><use href="#blocked"/></svg></div>
        <div class="name-col"><svg class="pix" width="520" height="213">
          <rect x="0" y="84" width="62" height="52" fill="#555557"/><rect x="62" y="84" width="62" height="52" fill="#4a4a4c"/><rect x="124" y="84" width="123" height="52" fill="#656567"/><rect x="247" y="84" width="125" height="52" fill="#6c6c6e"/><rect x="372" y="84" width="62" height="52" fill="#5c5c5e"/><rect x="434" y="84" width="62" height="52" fill="#68686a"/><rect x="496" y="84" width="5" height="52" fill="#5c5c5e"/>
        </svg></div>
        <div class="time-col d-flex flex-column align-items-end"><div class="call-time">5:43 pm</div><svg class="sim-badge" width="39" height="45"><use href="#simbadge"/></svg></div>
      </li>
      <li class="call-row d-flex align-items-center">
        <div class="call-icon"><svg width="52" height="50"><use href="#blocked"/></svg></div>
        <div class="name-col name-text">+91</div>
        <div class="time-col d-flex flex-column align-items-end"><div class="call-time">2:52 pm</div><svg class="sim-badge" width="39" height="45"><use href="#simbadge"/></svg></div>
      </li>
    </ul>
  </section>

  <div class="fade-top"></div>
  <div class="fade-bottom"></div>

  <header class="status-row">
    <div class="clock">1:01</div>
    <div class="status-glyphs d-flex align-items-start">
      <svg width="42" height="48" viewBox="0 0 42 48" shape-rendering="crispEdges">
        <rect x="0" y="0" width="41" height="27" rx="2" fill="#d8d8d8"/>
        <rect x="5" y="6" width="7" height="7" fill="#8a8a8a"/><rect x="12" y="6" width="7" height="7" fill="#4e4e4e"/><rect x="19" y="6" width="7" height="7" fill="#9a9a9a"/><rect x="26" y="6" width="7" height="7" fill="#8a8a8a"/>
        <rect x="5" y="13" width="7" height="7" fill="#a8a8a8"/><rect x="12" y="13" width="7" height="7" fill="#8a8a8a"/><rect x="19" y="13" width="7" height="7" fill="#444"/><rect x="26" y="13" width="7" height="7" fill="#9a9a9a"/>
        <rect x="34" y="4" width="3" height="7" fill="#333"/><rect x="34" y="14" width="3" height="6" fill="#555"/>
        <g shape-rendering="auto" fill="none" stroke="#707070" stroke-width="3.4"><path d="M11 30V44M5.5 38.5L11 44L16.5 38.5"/><path d="M27 46V32M21.5 37.5L27 32L32.5 37.5"/></g>
      </svg>
      <svg width="42" height="48" viewBox="0 0 42 48" fill="#efefef">
        <rect x="0" y="22" width="5.4" height="12" rx="2.7"/><rect x="12" y="15" width="5.4" height="19" rx="2.7"/><rect x="24" y="8" width="5.4" height="26" rx="2.7"/><rect x="36" y="1" width="5.4" height="33" rx="2.7"/>
        <rect x="0" y="37" width="5.4" height="10" rx="2.7"/><rect x="12" y="37" width="5.4" height="10" rx="2.7"/><rect x="24" y="37" width="5.4" height="10" rx="2.7"/><rect x="36" y="37" width="5.4" height="10" rx="2.7"/>
      </svg>
      <div class="battery-pill">
        <div class="battery-rest"></div>
        <svg class="battery-leaf" width="28" height="21" viewBox="0 0 28 21" fill="#3c3c3c"><path d="M8 13C8 5 16 1 28 1C27 11 22 17 13 16.5C11.5 16.4 10 16 9.5 15.5L2 20.5L0.5 19L8 14Z"/></svg>
        <div class="battery-num">68</div>
      </div>
    </div>
  </header>

  <div class="tool-pill d-flex align-items-center">
    <svg width="58" height="58" viewBox="0 0 58 58" fill="none" stroke="#fff" stroke-width="6.5" stroke-linecap="round">
      <path d="M3 5H55"/><path d="M3 30H25"/><path d="M3 55H25"/><path d="M45 33V55"/>
      <path d="M32 28H58L45 41Z" fill="#fff" stroke="none"/>
    </svg>
    <svg class="tool-gap-a" width="65" height="66" viewBox="0 0 65 66" fill="none" stroke="#fff" stroke-width="5.5" stroke-linecap="round"><circle cx="27" cy="27" r="24.3"/><path d="M44 45L63 64"/></svg>
    <svg class="tool-gap-b" width="22" height="60" viewBox="0 0 22 60" fill="#fff"><circle cx="11" cy="7" r="5.8"/><circle cx="11" cy="30" r="5.8"/><circle cx="11" cy="53" r="5.8"/></svg>
    <span class="tool-dot"></span>
  </div>

  <nav class="nav-pill d-flex">
    <div class="nav-tab tab-a">
      <svg width="50" height="64" viewBox="0 0 50 64" fill="#e8e8e8"><circle cx="6" cy="3" r="5"/><circle cx="25" cy="3" r="5"/><circle cx="44" cy="3" r="5"/><circle cx="6" cy="22" r="5"/><circle cx="25" cy="22" r="5"/><circle cx="44" cy="22" r="5"/><circle cx="6" cy="42" r="5"/><circle cx="25" cy="42" r="5"/><circle cx="44" cy="42" r="5"/><circle cx="25" cy="61" r="5"/></svg>
      <div class="nav-label">Keypad</div>
    </div>
    <div class="nav-tab tab-b">
      <svg width="75" height="64" viewBox="0 0 75 64">
        <path d="M8 3C2.5 4 0 9 .5 16C2 36 21 57 44 63C51 65 59 62 62 55C63 52 61.5 50 60 48.5L51 43C48.5 41.5 46 42 44 44L41 48C33 43 25 33 21 25L24 23C26 21 26.5 19 26 17L21.5 6C20 3 13 2 8 3Z" fill="#fff"/>
        <g fill="none" stroke="#fff" stroke-width="3.4" stroke-linecap="round" stroke-linejoin="round"><path d="M53.3 1L32.7 22M32 12V23H43"/><path d="M49.2 30.7L71 8M60 8H72V19"/></g>
      </svg>
      <div class="nav-label">Recents</div>
    </div>
    <div class="nav-tab tab-c">
      <svg width="59" height="64" viewBox="0 0 59 64" fill="none" stroke="#ececec" stroke-width="4.6"><circle cx="29.5" cy="15.3" r="12.5"/><path d="M2.5 61.5C2.5 45 14 35 29.5 35C45 35 56.5 45 56.5 61.5Z" stroke-linejoin="round"/></svg>
      <div class="nav-label">Contacts</div>
    </div>
  </nav>

  <div class="home-bar"></div>
</main>
<script src="https://cdn.jsdelivr.net/npm/bootstrap@5.3.0/dist/js/bootstrap.bundle.min.js"></script>
</body>
</html>
